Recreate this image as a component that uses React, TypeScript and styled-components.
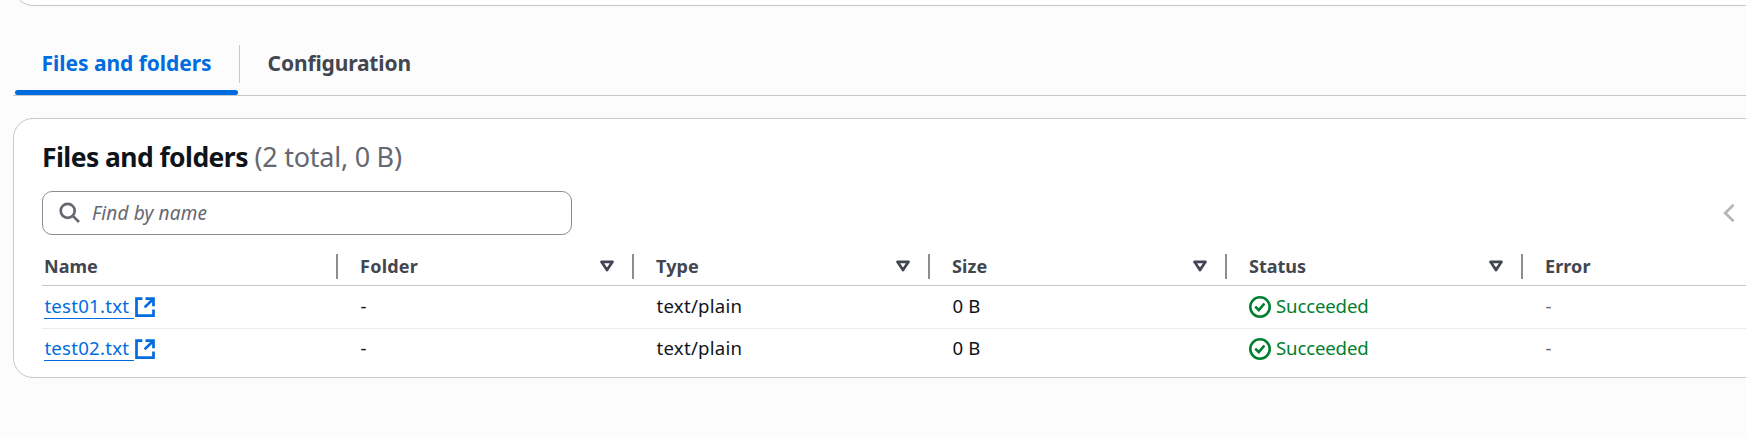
import React from 'react';
import styled, { createGlobalStyle } from 'styled-components';

const GlobalStyle = createGlobalStyle`
  * { box-sizing: border-box; }
  body {
    margin: 0;
    background: #fcfcfd;
    color: #0f141a;
    font-family: "Noto Sans", "Open Sans", sans-serif;
    font-size: 18px;
    overflow: hidden;
  }
`;

const Page = styled.main`
  width: 1760px;
  height: 437px;
  padding-left: 13px;
  overflow: hidden;
`;

const PreviousPanel = styled.div`
  height: 6px;
  overflow: hidden;
  display: flex;
  align-items: flex-end;
  &::before {
    content: '';
    flex: 1;
    height: 60px;
    background: #fff;
    border: 1px solid #c6c6cd;
    border-radius: 20px;
    margin-right: -30px;
  }
`;

const TabList = styled.nav`
  display: flex;
  height: 61px;
  margin-top: 29px;
  border-bottom: 1px solid #c6c6cd;
  padding-left: 2px;
`;

const Tab = styled.button<{ $active?: boolean }>`
  display: flex;
  flex-direction: column;
  justify-content: space-between;
  width: ${(p) => (p.$active ? 223 : 220)}px;
  padding: 13px 0 0;
  border: 0;
  background: none;
  text-align: left;
  font: 700 21px/30px "Noto Sans", sans-serif;
  color: ${(p) => (p.$active ? '#006ce0' : '#424650')};
  letter-spacing: ${(p) => (p.$active ? -0.05 : -0.15)}px;
  &::after {
    content: '';
    height: 5px;
    width: 100%;
    border-radius: 3px;
    background: ${(p) => (p.$active ? '#006ce0' : 'transparent')};
  }
`;

const TabLabel = styled.span`
  padding-left: 26.6px;
`;

const TabDivider = styled.span`
  width: 1px;
  height: 38px;
  margin: 10px 1px 0;
  background: #c6c6cd;
`;

const Card = styled.section`
  height: 260px;
  margin-top: 22px;
  padding: 0 28px;
  background: #fff;
  border: 1px solid #c6c6cd;
  border-radius: 20px;
  margin-right: -30px;
`;

const Title = styled.h2`
  display: flex;
  align-items: baseline;
  gap: 6.5px;
  margin: 0;
  padding-top: 19px;
  height: 72px;
  font-size: 26.5px;
  line-height: 38px;
  letter-spacing: -0.57px;
`;

const Counter = styled.span`
  font-size: 27px;
  font-weight: 400;
  letter-spacing: -0.25px;
  color: #656871;
`;

const Tools = styled.div`
  display: flex;
  align-items: center;
  width: 1693px;
  justify-content: space-between;
`;

const SearchBox = styled.div`
  display: flex;
  align-items: center;
  gap: 11px;
  width: 530px;
  height: 44px;
  padding-left: 16px;
  border: 1px solid #8c8c94;
  border-radius: 10px;
  color: #656871;
`;

const Placeholder = styled.span`
  font-size: 19px;
  font-style: italic;
  letter-spacing: 0.15px;
`;

const Row = styled.div<{ $kind?: 'head' | 'last' }>`
  display: grid;
  grid-template-columns: 296px 296px 296px 297px 296px 300px;
  height: ${(p) => (p.$kind === 'head' ? 51 : p.$kind === 'last' ? 41 : 43)}px;
  border-bottom: ${(p) =>
    p.$kind === 'head' ? '1px solid #c6c6cd' : p.$kind === 'last' ? '0' : '1px solid #ebebf0'};
`;

const HeadCell = styled.div<{ $first?: boolean; $spacing?: number }>`
  display: flex;
  align-items: center;
  justify-content: space-between;
  height: 25px;
  margin-top: 19px;
  padding-left: ${(p) => (p.$first ? 2 : 22)}px;
  padding-right: 18px;
  padding-bottom: 2px;
  border-right: 2px solid #8c8c94;
  font-weight: 700;
  color: #424650;
  letter-spacing: ${(p) => p.$spacing ?? 0}px;
  &:last-child { border-right: 0; }
`;

const Cell = styled.div<{ $first?: boolean; $muted?: boolean; $last?: boolean; $spacing?: number }>`
  display: flex;
  align-items: center;
  font-size: 18.6px;
  height: ${(p) => (p.$last ? 40 : 42)}px;
  padding-left: ${(p) => (p.$first ? 2.4 : 22.5)}px;
  letter-spacing: ${(p) => p.$spacing ?? 0}px;
  color: ${(p) => (p.$muted ? '#656871' : '#0f141a')};
`;

const CellText = styled.span`
  line-height: 24px;
  margin-bottom: 2px;
`;

const FileLink = styled.a`
  display: flex;
  align-items: center;
  color: #006ce0;
  gap: 1px;
`;

const FileName = styled.span`
  width: 89.6px;
  line-height: 24px;
  margin-bottom: 1px;
  border-bottom: 1px solid #006ce0;
`;

const Status = styled.span`
  display: flex;
  align-items: center;
  gap: 5px;
  margin-left: -0.5px;
  color: #00802f;
  letter-spacing: -0.15px;
`;

const SearchIcon = () => (
  <svg width="22" height="22" viewBox="0 0 22 22" fill="none" stroke="currentColor" strokeWidth="2.7">
    <circle cx="8.7" cy="8.8" r="7" />
    <path d="M13.5 13.6 20 20" />
  </svg>
);

const SortIcon = () => (
  <svg width="14" height="12" viewBox="0 0 14 12" fill="none" stroke="#424650" strokeWidth="2.7" strokeLinejoin="round">
    <path d="M1.5 1.8h11L7 10.1Z" />
  </svg>
);

const ExternalIcon = () => (
  <svg width="20" height="20" viewBox="0 0 20 20" fill="none" stroke="#006ce0" strokeWidth="2.7">
    <path d="M7.4 1.6H1.5v17h17v-6M10.5 1.6h8v7.7M18.2 2 9.6 10.4" />
  </svg>
);

const CheckIcon = () => (
  <svg width="22" height="22" viewBox="0 0 22 22" fill="none" stroke="#00802f" strokeWidth="2.6">
    <circle cx="11" cy="11" r="9.7" />
    <path d="m6.2 10.6 3.6 3.4 5.6-6.5" />
  </svg>
);

const PreviousIcon = () => (
  <svg width="12" height="20" viewBox="0 0 12 20" fill="none" stroke="#b4b4bb" strokeWidth="2.7">
    <path d="M10.6 1.7 2.2 10l8.4 8.3" />
  </svg>
);

const columns = [
  { label: 'Folder', spacing: 0.25, sortable: true },
  { label: 'Type', spacing: 0.1, sortable: true },
  { label: 'Size', spacing: 0.1, sortable: true },
  { label: 'Status', spacing: 0, sortable: true },
  { label: 'Error', spacing: 0.1, sortable: false },
];

const files = ['test01.txt', 'test02.txt'];

export default function App() {
  return (
    <Page>
      <GlobalStyle />
      <PreviousPanel />
      <TabList>
        <Tab $active><TabLabel>Files and folders</TabLabel></Tab>
        <TabDivider />
        <Tab><TabLabel>Configuration</TabLabel></Tab>
      </TabList>
      <Card>
        <Title>Files and folders <Counter>(2 total, 0 B)</Counter></Title>
        <Tools>
          <SearchBox>
            <SearchIcon />
            <Placeholder>Find by name</Placeholder>
          </SearchBox>
          <PreviousIcon />
        </Tools>
        <Row $kind="head">
          <HeadCell $first>Name</HeadCell>
          {columns.map((c) => (
            <HeadCell key={c.label} $spacing={c.spacing}>
              {c.label}
              {c.sortable && <SortIcon />}
            </HeadCell>
          ))}
        </Row>
        {files.map((name, i) => {
          const last = i === files.length - 1;
          return (
            <Row key={name} $kind={last ? 'last' : undefined}>
              <Cell $first $last={last} $spacing={0.25}>
                <FileLink><FileName>{name}</FileName><ExternalIcon /></FileLink>
              </Cell>
              <Cell $last={last}><CellText>-</CellText></Cell>
              <Cell $last={last} $spacing={0.25}><CellText>text/plain</CellText></Cell>
              <Cell $last={last} $spacing={0.2}><CellText>0 B</CellText></Cell>
              <Cell $last={last}><Status><CheckIcon /><CellText>Succeeded</CellText></Status></Cell>
              <Cell $last={last} $muted><CellText>-</CellText></Cell>
            </Row>
          );
        })}
      </Card>
    </Page>
  );
}
